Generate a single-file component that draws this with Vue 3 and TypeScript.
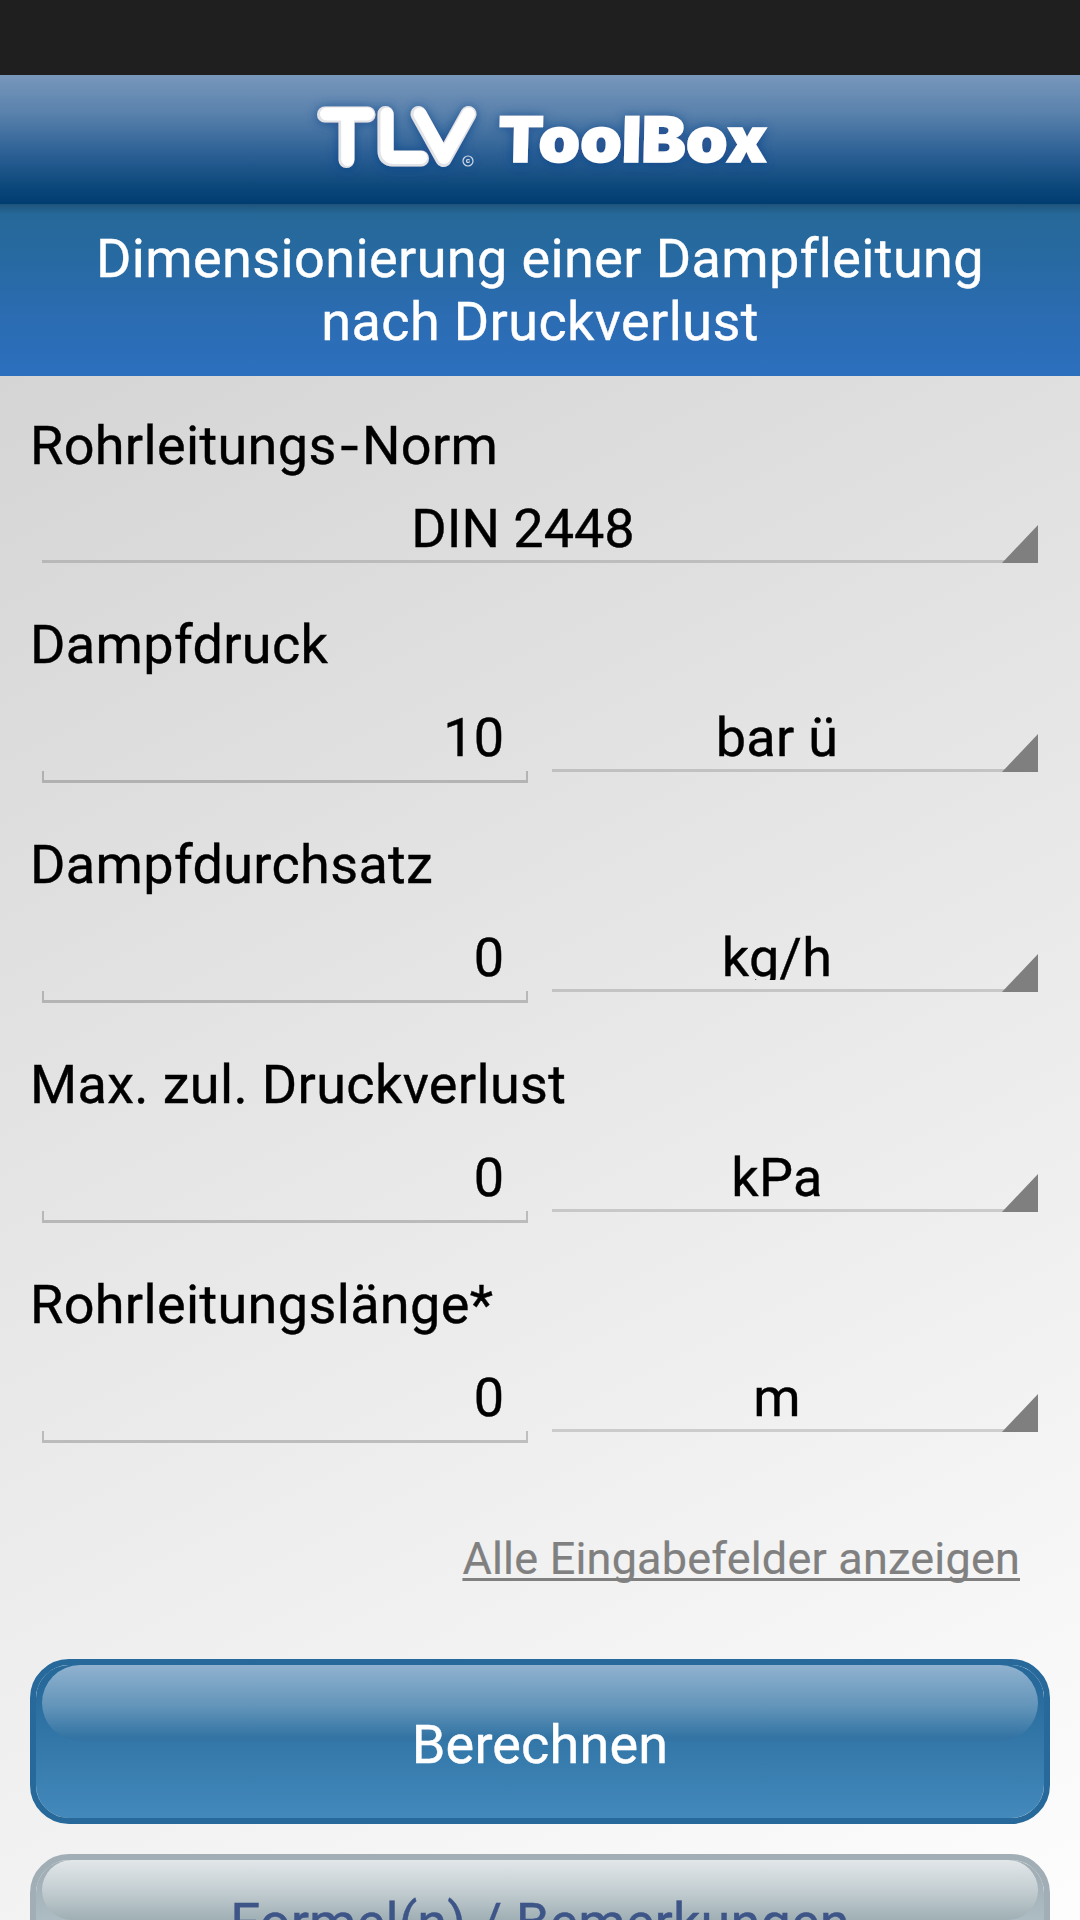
<script setup lang="ts">
import { ref } from 'vue'

interface Field {
  label: string
  value: string
  unit: string
}

const norm = ref('DIN 2448')
const fields = ref<Field[]>([
  { label: 'Dampfdruck', value: '10', unit: 'bar ü' },
  { label: 'Dampfdurchsatz', value: '0', unit: 'kg/h' },
  { label: 'Max. zul. Druckverlust', value: '0', unit: 'kPa' },
  { label: 'Rohrleitungslänge*', value: '0', unit: 'm' },
])
</script>

<template>
  <div class="screen">
    <div class="status"></div>
    <header class="bar">
      <svg class="logo" width="500" height="129" viewBox="300 75 500 129">
        <defs>
          <filter id="glow" x="-10%" y="-40%" width="120%" height="180%">
            <feDropShadow dx="0" dy="1" stdDeviation="6" flood-color="#0c3f8c" flood-opacity="0.75" />
          </filter>
        </defs>
        <g filter="url(#glow)">
          <g fill="none" stroke-linecap="round" stroke-linejoin="round">
            <g stroke="#e2e3e7" stroke-width="16">
              <path d="M325 114.500H367.500M346.500 114.500V160" />
              <path d="M385.500 114V151Q385.500 158.500 393 158.500H421" />
              <path d="M418.500 114L443.500 159L468.500 114" />
            </g>
            <g stroke="#fff" stroke-width="13">
              <path d="M326.500 114H367.500M347.700 114V159.500" />
              <path d="M387 114V150Q387 157.500 394 157.500H421" />
              <path d="M420 114L444 157.500L468.500 114" />
            </g>
          </g>
          <circle cx="468" cy="161" r="5" fill="none" stroke="#c9d6e8" stroke-width="1.200" />
          <text class="mark" x="468" y="163.300" text-anchor="middle">c</text>
          <text class="brand" x="0" y="0" textLength="269" lengthAdjust="spacingAndGlyphs" transform="translate(497.500 162.200) skewX(-1.500)">ToolBox</text>
        </g>
      </svg>
    </header>
    <h1 class="title">Dimensionierung einer Dampfleitung<br />nach Druckverlust</h1>

    <main class="form">
      <section class="field">
        <label class="label">Rohrleitungs<span class="hyphen">-</span>Norm</label>
        <div class="spinner wide">
          <span class="choice">{{ norm }}</span>
          <svg class="corner" width="36" height="38" viewBox="0 0 36 38"><path d="M36 0V38H0Z" /></svg>
        </div>
      </section>

      <section v-for="f in fields" :key="f.label" class="field">
        <label class="label">{{ f.label }}</label>
        <div class="row">
          <div class="entry">
            <span class="value">{{ f.value }}</span>
            <div class="bracket"></div>
          </div>
          <div class="spinner">
            <span class="choice">{{ f.unit }}</span>
            <svg class="corner" width="36" height="38" viewBox="0 0 36 38"><path d="M36 0V38H0Z" /></svg>
          </div>
        </div>
      </section>

      <a class="more">Alle Eingabefelder anzeigen</a>

      <button class="btn primary"><span>Berechnen</span></button>
      <button class="btn secondary"><span>Formel(n) / Bemerkungen</span></button>
    </main>
  </div>
</template>

<style>
body {
  margin: 0;
}
</style>

<style scoped>
.screen {
  width: 1080px;
  height: 1920px;
  overflow: hidden;
  display: flex;
  flex-direction: column;
  font-family: Roboto, 'Liberation Sans', sans-serif;
  font-size: 54px;
  line-height: 63px;
  color: #000;
  -webkit-text-stroke-width: 0.4px;
}
.status {
  flex: none;
  height: 75px;
  background: #1f1f1f;
}
.bar {
  flex: none;
  height: 129px;
  display: flex;
  padding-left: 300px;
  background: linear-gradient(#7897bb, #5b83ad 28%, #2b5f94 62%, #0a4679 88%, #003c6f);
}
.mark {
  font: 700 8px 'Liberation Sans', sans-serif;
  fill: #dbe4f0;
}
.brand {
  font-family: Inter, 'Liberation Sans', sans-serif;
  font-weight: 900;
  font-size: 62.5px;
  fill: #fff;
  stroke: #fff;
  stroke-width: 1.4px;
}
.title {
  flex: none;
  box-sizing: border-box;
  height: 172px;
  margin: 0;
  padding-top: 23px;
  font-size: 54px;
  font-weight: 400;
  line-height: 63px;
  text-align: center;
  color: #fff;
  letter-spacing: 0.38px;
  background:
    linear-gradient(rgba(20, 60, 90, 0.45), rgba(20, 60, 90, 0) 10px),
    linear-gradient(#266896, #276aa3 35%, #2b6cb2 65%, #2c6fbd);
}
.form {
  flex: 1;
  display: flex;
  flex-direction: column;
  padding: 38px 30px 0;
  background: linear-gradient(153deg, #d5d5d5, #fff);
}
.field {
  display: flex;
  flex-direction: column;
  flex: none;
  margin-bottom: 50px;
}
.label {
  height: 63px;
  white-space: nowrap;
  letter-spacing: 0.35px;
}
.hyphen {
  display: inline-block;
  margin: 0 5px;
  transform: scaleX(1.2);
}
.row {
  display: flex;
  gap: 24px;
  height: 107px;
  padding: 0 12px;
}
.entry {
  width: 486px;
  display: flex;
  flex-direction: column;
  justify-content: space-between;
}
.value {
  padding: 30px 24px 0 0;
  text-align: right;
  line-height: 63px;
  height: 63px;
}
.bracket {
  box-sizing: border-box;
  height: 12px;
  border: solid rgba(0, 0, 0, 0.2);
  border-width: 0 2px 3px;
}
.spinner {
  box-sizing: border-box;
  position: relative;
  width: 486px;
  height: 96px;
  padding: 30px 36px 0 0;
  border-bottom: 3px solid rgba(0, 0, 0, 0.15);
  text-align: center;
}
.spinner.wide {
  width: auto;
  height: 86px;
  margin: 0 12px;
  padding: 20px 34px 0 0;
}
.choice {
  display: block;
  height: 63px;
  /* descenders end just above the underline */
  clip-path: inset(0 0 9px 0);
  letter-spacing: 0.3px;
}
.wide .choice {
  letter-spacing: 0;
}
.corner {
  position: absolute;
  right: 0;
  bottom: -3px;
  fill: #7f7f7f;
}
.more {
  flex: none;
  align-self: flex-end;
  margin: 39px 30px 74px 0;
  height: 53px;
  font-size: 45px;
  line-height: 53px;
  color: #808080;
  text-decoration: underline;
  text-decoration-thickness: 3px;
  text-decoration-skip-ink: none;
  text-underline-offset: 4px;
  letter-spacing: 0.2px;
  -webkit-text-stroke-width: 0.2px;
}
.btn {
  flex: none;
  position: relative;
  box-sizing: border-box;
  height: 165px;
  margin: 0 0 30px;
  padding: 5px 0 0;
  border: 6px solid;
  border-radius: 39px;
  font: inherit;
  letter-spacing: 0.15px;
}
.btn span {
  position: relative;
}
.btn::before {
  content: '';
  position: absolute;
  top: 0;
  left: 6px;
  right: 6px;
}
.primary {
  border-color: #26699a;
  color: #fff;
  background: linear-gradient(#26699a 12%, #3478aa 52%, #4489bb) padding-box;
}
.primary::before {
  height: 76px;
  border-radius: 38px;
  background: linear-gradient(#90b2cf, #6294b9 55%, #3374a4 95%);
}
.secondary {
  height: 131px;
  border-color: #a1aeb5;
  color: #3e5588;
  background: linear-gradient(#a1aeb5 12%, #b0c0c7 60%, #c4d2d8) padding-box;
}
.secondary::before {
  height: 60px;
  border-radius: 30px;
  background: linear-gradient(#e2e7e9, #c4ced2 50%, #9fafb4);
}
</style>
